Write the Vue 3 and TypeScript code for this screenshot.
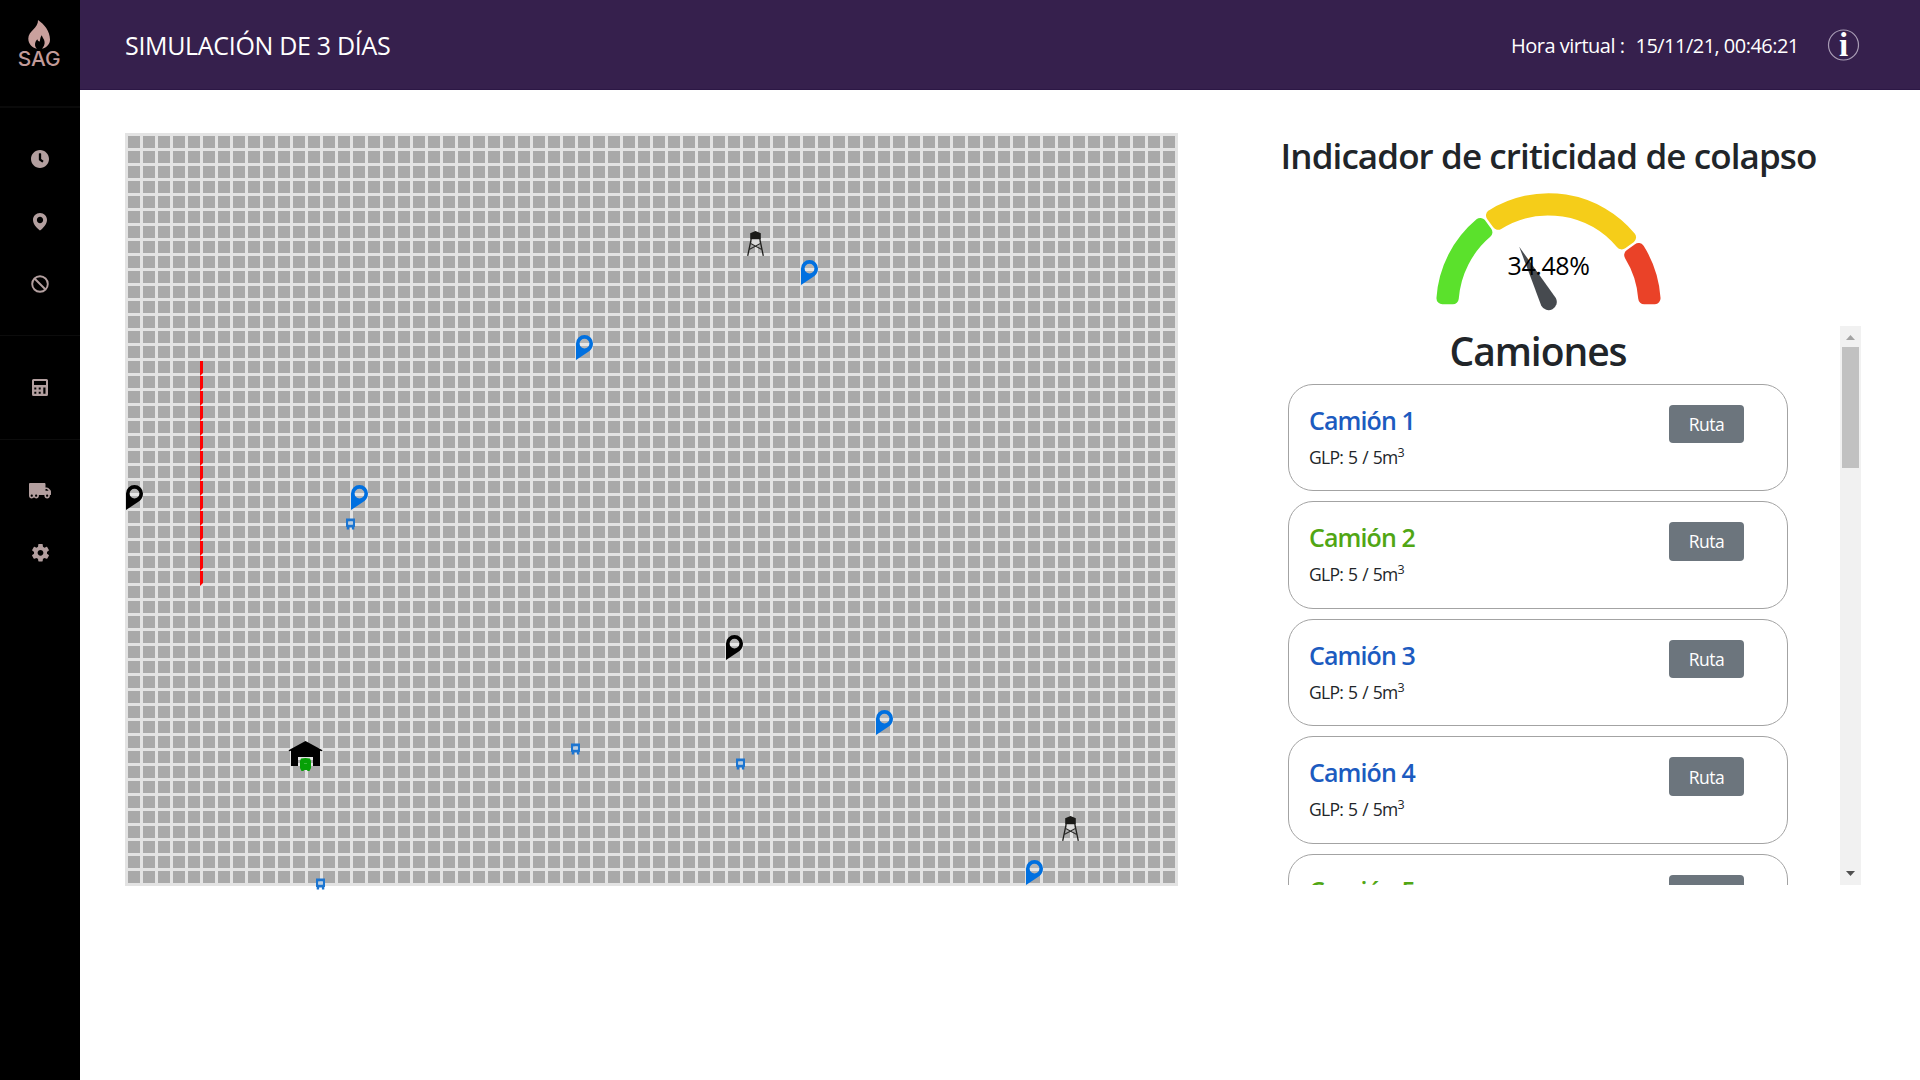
<script setup lang="ts">
interface Point { x: number; y: number }
interface Pin extends Point { color: string }
interface Truck { id: number; color: string }

const GREEN = '#51a614'
const BLUE = '#1c5bc0'

const trucks: Truck[] = [
  { id: 1, color: BLUE },
  { id: 2, color: GREEN },
  { id: 3, color: BLUE },
  { id: 4, color: BLUE },
  { id: 5, color: GREEN },
]

const pins: Pin[] = [
  { x: 1, y: 352, color: '#000' },
  { x: 226, y: 352, color: '#0070e0' },
  { x: 451, y: 202, color: '#0070e0' },
  { x: 676, y: 127, color: '#0070e0' },
  { x: 601, y: 502, color: '#000' },
  { x: 751, y: 577, color: '#0070e0' },
  { x: 901, y: 727, color: '#0070e0' },
]

const towers: Point[] = [{ x: 622, y: 98 }, { x: 937, y: 683 }]

const vehicles: Point[] = [
  { x: 221, y: 385.5 },
  { x: 446, y: 610.5 },
  { x: 611, y: 625.5 },
  { x: 191, y: 745.5 },
]

const blocked = Array.from({ length: 15 }, (_, i) => 228 + i * 15)

/* Gauge: half ring split at 30% and 80%, corners rounded by a round-joined stroke */
const OUTER = 112.3
const INNER = 90
const CORNER = 6
const PAD = 1.2
const cx = 114.5
const cy = 115.5

function at(r: number, angle: number): string {
  return `${(cx - r * Math.cos(angle)).toFixed(2)} ${(cy - r * Math.sin(angle)).toFixed(2)}`
}

function sector(from: number, to: number): string {
  const ro = OUTER - CORNER
  const ri = INNER + CORNER
  const off = CORNER + PAD
  const a = from * Math.PI
  const b = to * Math.PI
  const oo = Math.asin(off / ro)
  const oi = Math.asin(off / ri)
  return `M${at(ro, a + oo)}A${ro} ${ro} 0 0 1 ${at(ro, b - oo)}L${at(ri, b - oi)}A${ri} ${ri} 0 0 0 ${at(ri, a + oi)}Z`
}

const arcs = [
  { d: sector(0, 0.3), color: '#5be12c' },
  { d: sector(0.3, 0.8), color: '#f5cd19' },
  { d: sector(0.8, 1), color: '#ea4228' },
]
</script>

<template>
  <div class="app">
    <aside class="sidebar">
      <div class="logo">
        <svg width="80" height="106" viewBox="0 0 80 106">
          <path
            fill="#c9a09d"
            d="M38 20C44 24 50 31 50 39.500C50 44 47 47.500 42 48.800C44 46.500 45 44 44.500 41.500C44.200 39 42.500 38 41.800 35.300C40.500 36.500 40.300 39 39.800 41.500C38.500 41.500 37.800 40.500 37.300 39.200C35 41.500 33.800 46 37 48.800C32 47.500 28.300 44 28.300 38.500C28.300 31 38.500 28 38 20Z"
          />
          <text x="17.700" y="65.700" textLength="43" lengthAdjust="spacingAndGlyphs" class="logo-text">SAG</text>
        </svg>
      </div>
      <nav class="group">
        <a class="item">
          <svg width="18" height="18" viewBox="8 8 496 496"><path fill="currentColor" d="M256,8C119,8,8,119,8,256S119,504,256,504,504,393,504,256,393,8,256,8Zm92.490,313h0l-20,25a16,16,0,0,1-22.490,2.500h0l-67-49.720a40,40,0,0,1-15-31.230V112a16,16,0,0,1,16-16h32a16,16,0,0,1,16,16V256l58,42.500A16,16,0,0,1,348.490,321Z" /></svg>
        </a>
        <a class="item">
          <svg width="14" height="17.500" viewBox="4 2 16 20"><path fill="currentColor" d="M12 2C7.589 2 4 5.589 4 9.995 3.971 16.440 11.696 21.784 12 22c0 0 8.029-5.560 8-12 0-4.411-3.589-8-8-8zm0 11.600c-2 0-3.600-1.600-3.600-3.600s1.600-3.600 3.600-3.600 3.600 1.600 3.600 3.600-1.600 3.600-3.600 3.600z" /></svg>
        </a>
        <a class="item">
          <svg width="18" height="18" viewBox="0 0 18 18" fill="none" stroke="currentColor" stroke-width="1.900"><circle cx="9" cy="9" r="7.800" /><path d="M3.500 3.500l11 11" /></svg>
        </a>
      </nav>
      <nav class="group">
        <a class="item">
          <svg width="16" height="17" viewBox="0 0 16 17"><path fill="currentColor" fill-rule="evenodd" d="M1.500 0h13A1.500 1.500 0 0 1 16 1.500v14a1.500 1.500 0 0 1-1.500 1.500h-13A1.500 1.500 0 0 1 0 15.500v-14A1.500 1.500 0 0 1 1.500 0zM2 2v4h12V2zM2.300 8.500v2h2v-2zM6.700 8.500v2h2v-2zM2.300 12.800v2h2v-2zM6.700 12.800v2h2v-2zM11.300 8.500v6.300h2.200V8.500z" /></svg>
        </a>
      </nav>
      <nav class="group">
        <a class="item">
          <svg width="22" height="15.400" viewBox="0 32 640 448"><path fill="currentColor" d="M621.300 237.300l-58.500-58.500c-12-12-28.300-18.700-45.300-18.700H480V64c0-17.700-14.300-32-32-32H32C14.300 32 0 46.300 0 64v336c0 44.200 35.800 80 80 80 26.300 0 49.400-12.900 64-32.400 14.600 19.600 37.700 32.400 64 32.400 44.200 0 80-35.800 80-80 0-5.500-.6-10.800-1.600-16h163.200c-1.100 5.200-1.600 10.500-1.600 16 0 44.200 35.800 80 80 80s80-35.800 80-80c0-5.500-.6-10.800-1.600-16H624c8.800 0 16-7.200 16-16v-85.500c0-17-6.700-33.200-18.700-45.200zM80 432c-17.600 0-32-14.400-32-32s14.400-32 32-32 32 14.400 32 32-14.400 32-32 32zm128 0c-17.600 0-32-14.400-32-32s14.400-32 32-32 32 14.400 32 32-14.400 32-32 32zm272-224h37.500c4.300 0 8.300 1.700 11.300 4.700l43.300 43.300H480v-48zm48 224c-17.600 0-32-14.400-32-32s14.400-32 32-32 32 14.400 32 32-14.400 32-32 32z" /></svg>
        </a>
        <a class="item">
          <svg width="17" height="17.600" viewBox="2.600 2.400 18.800 19.200"><path fill="currentColor" d="M19.140 12.940c.04-.3.06-.61.06-.94 0-.32-.02-.64-.07-.94l2.030-1.580c.18-.14.23-.41.12-.61l-1.920-3.320c-.12-.22-.37-.29-.59-.22l-2.390.96c-.5-.38-1.030-.7-1.620-.94l-.36-2.540c-.04-.24-.24-.41-.48-.41h-3.840c-.24 0-.43.17-.47.41l-.36 2.540c-.59.24-1.130.57-1.620.94l-2.390-.96c-.22-.08-.47 0-.59.22L2.740 8.870c-.12.21-.08.47.12.61l2.030 1.580c-.05.3-.09.63-.09.94s.02.64.07.94l-2.030 1.580c-.18.14-.23.41-.12.61l1.920 3.320c.12.22.37.29.59.22l2.390-.96c.5.38 1.030.7 1.620.94l.36 2.540c.05.24.24.41.48.41h3.840c.24 0 .44-.17.47-.41l.36-2.540c.59-.24 1.130-.56 1.620-.94l2.390.96c.22.08.47 0 .59-.22l1.920-3.320c.12-.22.07-.47-.12-.61l-2.010-1.580zM12 15.200c-1.800 0-3.200-1.400-3.200-3.200s1.400-3.200 3.200-3.200 3.200 1.400 3.200 3.200-1.400 3.200-3.200 3.200z" /></svg>
        </a>
      </nav>
    </aside>

    <div class="page">
      <header class="topbar">
        <span class="title">SIMULACIÓN DE 3 DÍAS</span>
        <span class="clock-label">Hora virtual :</span>
        <span class="clock-value">15/11/21, 00:46:21</span>
        <svg class="info" width="32" height="32" viewBox="0 0 32 32">
          <circle cx="15.500" cy="16" r="15" fill="none" stroke="#a99cb5" stroke-width="1.200" />
          <text x="15.500" y="27.200" text-anchor="middle" class="info-text">i</text>
        </svg>
      </header>

      <main class="content">
        <svg class="map" width="1053" height="753" viewBox="0 0 1053 753">
          <defs>
            <pattern id="cells" width="15" height="15" patternUnits="userSpaceOnUse">
              <rect width="15" height="15" fill="#e3e3e3" />
              <rect x="3" y="3" width="12" height="12" fill="#a9a9a9" />
            </pattern>
          </defs>
          <rect width="1053" height="753" fill="url(#cells)" />
          <path v-for="y in blocked" :key="y" :transform="`translate(75 ${y})`" d="M0 0h3v12l-3 3z" fill="#f00" />
          <g v-for="(p, i) in pins" :key="`p${i}`" :transform="`translate(${p.x} ${p.y})`">
            <circle cx="8.500" cy="8.500" r="5.500" fill="#fff" fill-opacity="0.150" />
            <path
              :fill="p.color"
              fill-rule="evenodd"
              d="M0 25V8.500A8.500 8.500 0 0 1 17 8.500C17 12.500 15 15 12 17ZM8.500 3.700a4.900 4.900 0 1 0 0 9.800a4.900 4.900 0 1 0 0-9.800z"
            />
          </g>
          <g v-for="(t, i) in towers" :key="`t${i}`" :transform="`translate(${t.x} ${t.y})`">
            <path fill="#dcdcdc" d="M5 9h7l1 5-4.500 1L4 14z" />
            <path fill="#1a1a18" d="M3.200 2.300L8.500 0l5.300 2.300V8.200H3.200z" />
            <path fill="none" stroke="#1f1f1d" stroke-width="1.300" d="M4.200 8L.7 24.800M12.800 8l3.500 16.800" />
            <path fill="none" stroke="#2b2b29" stroke-width="1.100" d="M3.600 12.500l11.200 6M13.400 12.500l-11.200 6" />
          </g>
          <path fill="#000" d="M180.500 608L197.500 617.300L196.700 618.300L195 617.800V633H188V624H173V633H166V617.800L164.300 618.300L163.500 617.300Z" />
          <path fill="#e3e3e3" d="M173 624h15v3h-15z" />
          <g transform="translate(175 625)">
            <path fill="#06a006" d="M1 .5Q5.500-.4 10 .5L11 3V10L9.500 13H7.500L7 12H4l-.5 1H1.500L0 10V3z" />
            <path stroke="#4cc04c" stroke-width="0.800" d="M4 5.500h3" />
          </g>
          <g v-for="(v, i) in vehicles" :key="`v${i}`" :transform="`translate(${v.x} ${v.y})`">
            <path fill="#1c75d1" fill-rule="evenodd" d="M0 0h9v8.500h-.7V11H5.900V9H3.100v2H.7V8.500H0zM2.200 3v3h4.600V3z" />
            <path fill="#b9cde2" d="M2.200 3h4.600v3H2.200z" />
          </g>
        </svg>

        <section class="panel">
          <h2 class="heading">Indicador de criticidad de colapso</h2>
          <svg class="gauge" width="230" height="128" viewBox="0 0 230 128">
            <path
              v-for="a in arcs"
              :key="a.color"
              :d="a.d"
              :fill="a.color"
              :stroke="a.color"
              stroke-width="12"
              stroke-linejoin="round"
            />
            <path fill="#464a4f" d="M85.200 56.700L121.800 108A8.200 8.200 0 1 1 107.300 115.800Z" />
            <text x="114.500" y="85.200" text-anchor="middle" class="gauge-text">34.48%</text>
          </svg>

          <div class="scroller">
            <div class="list">
              <h1 class="list-title">Camiones</h1>
              <article v-for="t in trucks" :key="t.id" class="card">
                <div class="card-info">
                  <h5 class="card-title" :style="{ color: t.color }">Camión {{ t.id }}</h5>
                  <p class="card-text">GLP: 5 / 5m<sup>3</sup></p>
                </div>
                <button class="route" type="button">Ruta</button>
              </article>
            </div>
            <div class="scrollbar">
              <svg width="21" height="21" viewBox="0 0 21 21"><path fill="#a3a3a3" d="M6 14l4.500-5 4.500 5z" /></svg>
              <div class="thumb"></div>
              <svg class="down" width="21" height="21" viewBox="0 0 21 21"><path fill="#505050" d="M6 7l4.500 5L15 7z" /></svg>
            </div>
          </div>
        </section>
      </main>
    </div>
  </div>
</template>

<style>
body {
  margin: 0;
  background: #fff;
  overflow: hidden;
}
</style>

<style scoped>
.app {
  display: flex;
  height: 1080px;
  font-family: "Open Sans", "Noto Sans", sans-serif;
  color: #212529;
}
.app * {
  box-sizing: border-box;
}
svg {
  display: block;
  overflow: visible;
}
.sidebar {
  flex: 0 0 80px;
  background: #000;
  color: #b39f9f;
}
.logo {
  height: 106px;
}
.logo-text {
  font: 500 20.500px Inter, sans-serif;
  fill: #c29b99;
}
.group {
  border-top: 1px solid #0c0c0c;
  padding: 20px 0;
}
.logo + .group {
  border-top: 2px solid #0a0a0a;
  padding-bottom: 19.500px;
}
.item {
  display: flex;
  align-items: center;
  justify-content: center;
  height: 62.500px;
}
.page {
  flex: 1;
  min-width: 0;
}
.topbar {
  display: flex;
  align-items: center;
  height: 90px;
  padding: 0 60px 0 45px;
  background: #36204d;
  border-bottom: 1px solid #2c1745;
  color: #fff;
  font-size: 20px;
  white-space: pre;
}
.title,
.clock-label,
.clock-value {
  padding-top: 1px;
}
.title {
  flex: 1;
  font-size: 25px;
  letter-spacing: -0.320px;
}
.clock-label {
  width: 124.500px;
  letter-spacing: -0.500px;
}
.clock-value {
  width: 192.500px;
  letter-spacing: -0.530px;
}
.info-text {
  font: bold 33px "Liberation Serif", serif;
  fill: #fff;
}
.content {
  display: flex;
  align-items: flex-start;
  padding: 43px 59px 0 45px;
}
.map {
  flex: none;
}
.panel {
  width: 625px;
  height: 753px;
  margin-left: 58px;
  display: flex;
  flex-direction: column;
  align-items: center;
}
.heading {
  margin: 2px 0 0;
  height: 55px;
  font-size: 35px;
  line-height: 42px;
  font-weight: 600;
  letter-spacing: -0.900px;
  white-space: nowrap;
}
.gauge {
  flex: none;
}
.gauge-text {
  font-size: 25px;
  letter-spacing: -0.400px;
  fill: #000;
}
.scroller {
  display: flex;
  width: 100%;
  height: 559px;
  margin-top: 8px;
  overflow: hidden;
}
.list {
  flex: 1;
  display: flex;
  flex-direction: column;
  align-items: center;
}
.list-title {
  flex: none;
  margin: 0;
  padding-top: 1px;
  height: 57.700px;
  font-size: 39px;
  line-height: 48px;
  font-weight: 600;
  letter-spacing: -1.050px;
}
.card {
  flex: none;
  display: flex;
  justify-content: space-between;
  align-items: flex-start;
  width: 500px;
  height: 107.550px;
  margin-bottom: 10px;
  padding: 20px 43px 0 20px;
  border: 1.250px solid #a3a3a3;
  border-radius: 25px;
}
.card-title {
  margin: 0 0 9px;
  font-size: 25px;
  line-height: 30px;
  font-weight: 600;
  letter-spacing: -0.900px;
}
.card-text {
  margin: 0;
  font-size: 17.500px;
  line-height: 26px;
  letter-spacing: -0.700px;
  word-spacing: 1px;
}
sup {
  font-size: 12.500px;
  line-height: 0;
  vertical-align: baseline;
  position: relative;
  top: -7px;
}
.route {
  width: 75px;
  height: 38.500px;
  padding: 0;
  border: 0;
  border-radius: 4px;
  background: #6c757d;
  color: #fff;
  font: 17.500px "Open Sans", sans-serif;
  letter-spacing: -0.500px;
}
.scrollbar {
  flex: 0 0 21px;
  display: flex;
  flex-direction: column;
  align-items: center;
  background: #f1f1f1;
}
.thumb {
  width: 17px;
  height: 121px;
  background: #c1c1c1;
}
.down {
  margin-top: auto;
}
</style>
